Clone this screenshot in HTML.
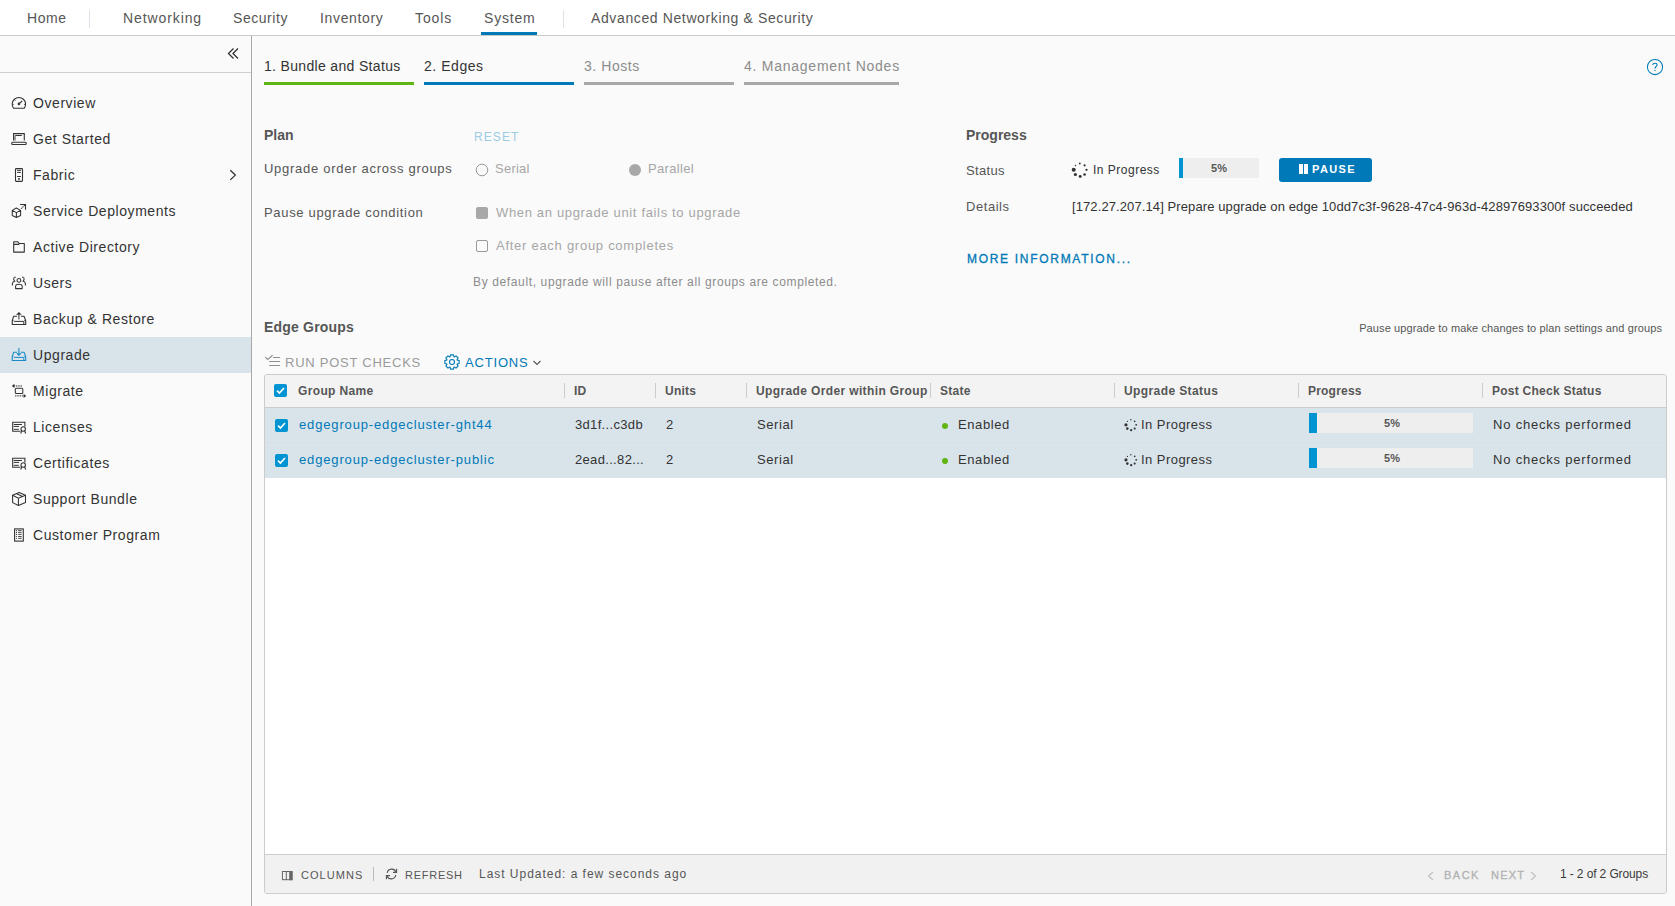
<!DOCTYPE html>
<html><head><meta charset="utf-8">
<style>
*{box-sizing:border-box;margin:0;padding:0}
html,body{width:1675px;height:906px;overflow:hidden;background:#fafafa;font-family:"Liberation Sans", sans-serif;color:#333}
.a{position:absolute;white-space:nowrap}
svg.a{overflow:visible}
</style></head><body>
<div class="a" style="left:0px;top:0px;width:1675px;height:35px;background:#fff;"></div>
<div class="a" style="left:0px;top:35px;width:1675px;height:1px;background:#c8c8c8;"></div>
<div class="a" style="left:27px;top:10px;font-size:14px;line-height:16px;color:#565656;font-weight:normal;letter-spacing:0.55px;">Home</div>
<div class="a" style="left:123px;top:10px;font-size:14px;line-height:16px;color:#565656;font-weight:normal;letter-spacing:0.9px;">Networking</div>
<div class="a" style="left:233px;top:10px;font-size:14px;line-height:16px;color:#565656;font-weight:normal;letter-spacing:0.55px;">Security</div>
<div class="a" style="left:320px;top:10px;font-size:14px;line-height:16px;color:#565656;font-weight:normal;letter-spacing:0.65px;">Inventory</div>
<div class="a" style="left:415px;top:10px;font-size:14px;line-height:16px;color:#565656;font-weight:normal;letter-spacing:0.9px;">Tools</div>
<div class="a" style="left:484px;top:10px;font-size:14px;line-height:16px;color:#565656;font-weight:normal;letter-spacing:0.8px;">System</div>
<div class="a" style="left:591px;top:10px;font-size:14px;line-height:16px;color:#565656;font-weight:normal;letter-spacing:0.62px;">Advanced Networking &amp; Security</div>
<div class="a" style="left:89px;top:10px;width:1px;height:18px;background:#dde3e8;"></div>
<div class="a" style="left:563px;top:10px;width:1px;height:18px;background:#dde3e8;"></div>
<div class="a" style="left:481px;top:32px;width:56px;height:3px;background:#0079b8;"></div>
<div class="a" style="left:0px;top:36px;width:251px;height:870px;background:#fafafa;"></div>
<div class="a" style="left:251px;top:36px;width:1px;height:870px;background:#a8a8a8;"></div>
<div class="a" style="left:0px;top:72px;width:251px;height:1px;background:#cfcfcf;"></div>
<svg class="a" style="left:226px;top:47px" width="14" height="14" viewBox="0 0 14 14"><path d="M7.5 1.5 L2.5 6.5 L7.5 11.5 M12 1.5 L7 6.5 L12 11.5" fill="none" stroke="#333" stroke-width="1.3"/></svg>
<div class="a" style="left:0px;top:337px;width:251px;height:36px;background:#d9e4ea;"></div>
<div class="a" style="left:33px;top:95px;font-size:14px;line-height:16px;color:#333;font-weight:normal;letter-spacing:0.57px;">Overview</div>
<svg class="a" style="left:11px;top:96px" width="16" height="16" viewBox="0 0 16 16"><path d="M2.6 12.3 A6.7 6.7 0 1 1 13.2 12.3 Z" fill="none" stroke="#333" stroke-width="1.1" stroke-linejoin="round"/><path d="M7.9 7.9 L11.1 5" fill="none" stroke="#333" stroke-width="1.1"/><circle cx="7.9" cy="7.9" r="1.3" fill="#333"/><path d="M1.3 8.4 H2.6 M13.2 8.4 H14.5 M3.4 3.6 L4.4 4.5" fill="none" stroke="#333" stroke-width="1"/></svg>
<div class="a" style="left:33px;top:131px;font-size:14px;line-height:16px;color:#333;font-weight:normal;letter-spacing:0.57px;">Get Started</div>
<svg class="a" style="left:11px;top:132px" width="16" height="16" viewBox="0 0 16 16"><path d="M2.6 8.6 V1.6 H13.3 V8.6" fill="none" stroke="#333" stroke-width="1.1"/><path d="M4.2 3.5 H10.8" fill="none" stroke="#333" stroke-width="1"/><rect x="3.2" y="3.5" width="1.6" height="5" fill="#888"/><rect x="0.7" y="10.3" width="14.6" height="2.2" rx="1" fill="none" stroke="#333" stroke-width="1.1"/></svg>
<div class="a" style="left:33px;top:167px;font-size:14px;line-height:16px;color:#333;font-weight:normal;letter-spacing:0.57px;">Fabric</div>
<svg class="a" style="left:11px;top:168px" width="16" height="16" viewBox="0 0 16 16"><rect x="4.5" y="0.6" width="7" height="12.8" rx="0.8" fill="none" stroke="#333" stroke-width="1.1"/><path d="M6.1 2.4 H9.9 M6.1 4.4 H9.9 M6.1 8.5 H9.9" fill="none" stroke="#333" stroke-width="1"/><rect x="7.2" y="10.1" width="1.7" height="1.7" fill="#333"/></svg>
<div class="a" style="left:33px;top:203px;font-size:14px;line-height:16px;color:#333;font-weight:normal;letter-spacing:0.57px;">Service Deployments</div>
<svg class="a" style="left:11px;top:204px" width="16" height="16" viewBox="0 0 16 16"><path d="M5.3 4 L9.6 6.4 V11.5 L5.4 13.5 L1.25 11.5 V6.4 Z M1.25 6.4 L5.4 8.6 L9.6 6.4 M5.4 8.6 V13.5" fill="none" stroke="#333" stroke-width="1.05" stroke-linejoin="round"/><path d="M10.1 4.7 L14.5 0.5" fill="none" stroke="#333" stroke-width="1.1" stroke-dasharray="1.3 0.7"/><path d="M9.1 0.5 H14.5 V5.7" fill="none" stroke="#333" stroke-width="1.1"/></svg>
<div class="a" style="left:33px;top:239px;font-size:14px;line-height:16px;color:#333;font-weight:normal;letter-spacing:0.57px;">Active Directory</div>
<svg class="a" style="left:11px;top:240px" width="16" height="16" viewBox="0 0 16 16"><path d="M2.7 12.1 V1.7 H6.6 L8.2 3.5 H13.3 V12.1 Z M2.7 4.4 H7.6 L8.4 3.6" fill="none" stroke="#333" stroke-width="1.1" stroke-linejoin="round"/></svg>
<div class="a" style="left:33px;top:275px;font-size:14px;line-height:16px;color:#333;font-weight:normal;letter-spacing:0.57px;">Users</div>
<svg class="a" style="left:11px;top:276px" width="16" height="16" viewBox="0 0 16 16"><circle cx="7.9" cy="4.4" r="1.9" fill="none" stroke="#333" stroke-width="1.05"/><path d="M4.6 12.6 V10 Q5 8.2 7.9 8.2 Q10.8 8.2 11.2 10 V12.6 Z" fill="none" stroke="#333" stroke-width="1.05" stroke-linejoin="round"/><path d="M3.2 1.3 H4.8 M2.9 1.6 Q2.3 3.8 3.6 5.2 Q2 5.6 1.4 7.3 V9.6" fill="none" stroke="#333" stroke-width="1.05"/><path d="M11 1.3 H12.6 M12.9 1.6 Q13.5 3.8 12.2 5.2 Q13.8 5.6 14.4 7.3 V9.6" fill="none" stroke="#333" stroke-width="1.05"/></svg>
<div class="a" style="left:33px;top:311px;font-size:14px;line-height:16px;color:#333;font-weight:normal;letter-spacing:0.57px;">Backup &amp; Restore</div>
<svg class="a" style="left:11px;top:312px" width="16" height="16" viewBox="0 0 16 16"><path d="M6 4.3 H2.6 L1.25 8.6 V12.5 H14.7 V8.6 L13 4.3 H9.9" fill="none" stroke="#333" stroke-width="1.1" stroke-linejoin="round"/><path d="M1.25 8.6 H2.5 M13.3 8.6 H14.7 M3.1 9.4 H12.8 V12.4" fill="none" stroke="#333" stroke-width="1.0"/><path d="M7.9 0.1 L5.1 2.7 H10.7 Z" fill="#333"/><path d="M7.9 2.5 V7.4" fill="none" stroke="#333" stroke-width="1.0"/></svg>
<div class="a" style="left:33px;top:347px;font-size:14px;line-height:16px;color:#333;font-weight:normal;letter-spacing:0.57px;">Upgrade</div>
<svg class="a" style="left:11px;top:348px" width="16" height="16" viewBox="0 0 16 16"><path d="M6 4.3 H2.6 L1.25 8.6 V12.5 H14.7 V8.6 L13 4.3 H9.9" fill="none" stroke="#1a8ac6" stroke-width="1.1" stroke-linejoin="round"/><path d="M1.25 8.6 H2.5 M13.3 8.6 H14.7 M3.1 9.4 H12.8 V12.4" fill="none" stroke="#1a8ac6" stroke-width="1.0"/><path d="M7.9 8 L5.1 5.3 H10.7 Z" fill="#1a8ac6"/><path d="M7.9 0 V5.5" fill="none" stroke="#1a8ac6" stroke-width="1.1"/></svg>
<div class="a" style="left:33px;top:383px;font-size:14px;line-height:16px;color:#333;font-weight:normal;letter-spacing:0.57px;">Migrate</div>
<svg class="a" style="left:11px;top:384px" width="16" height="16" viewBox="0 0 16 16"><rect x="4.3" y="4.3" width="7.5" height="5.2" rx="1" fill="none" stroke="#333" stroke-width="1.05"/><path d="M2.6 1.95 H11.8" fill="none" stroke="#333" stroke-width="1.0" stroke-dasharray="1.5 0.8"/><path d="M3.4 -0.2 L0.8 1.95 L3.4 4.1 Z" fill="#333"/><path d="M4 11.9 H13.2" fill="none" stroke="#333" stroke-width="1.0" stroke-dasharray="1.5 0.8"/><path d="M12.6 9.75 L15.2 11.9 L12.6 14.05 Z" fill="#333"/></svg>
<div class="a" style="left:33px;top:419px;font-size:14px;line-height:16px;color:#333;font-weight:normal;letter-spacing:0.57px;">Licenses</div>
<svg class="a" style="left:11px;top:420px" width="16" height="16" viewBox="0 0 16 16"><path d="M13.9 6.4 V2.3 H1.7 V11.3 H9.4" fill="none" stroke="#333" stroke-width="1.1"/><path d="M3.2 4.5 H10.6 M3.2 6.4 H7.7 M3.2 9.35 H7.4" fill="none" stroke="#333" stroke-width="1.0" stroke-linecap="round"/><circle cx="12.2" cy="8.9" r="2.25" fill="none" stroke="#333" stroke-width="1.05"/><path d="M10.8 10.7 L9.7 13.5 M13.6 10.7 L14.7 13.5" fill="none" stroke="#333" stroke-width="1.1"/></svg>
<div class="a" style="left:33px;top:455px;font-size:14px;line-height:16px;color:#333;font-weight:normal;letter-spacing:0.57px;">Certificates</div>
<svg class="a" style="left:11px;top:456px" width="16" height="16" viewBox="0 0 16 16"><path d="M13.9 6.4 V2.3 H1.7 V11.3 H9.4" fill="none" stroke="#333" stroke-width="1.1"/><path d="M3.2 4.5 H10.6 M3.2 6.4 H7.7 M3.2 9.35 H7.4" fill="none" stroke="#333" stroke-width="1.0" stroke-linecap="round"/><circle cx="12.2" cy="8.9" r="2.25" fill="none" stroke="#333" stroke-width="1.05"/><path d="M10.8 10.7 L9.7 13.5 M13.6 10.7 L14.7 13.5" fill="none" stroke="#333" stroke-width="1.1"/></svg>
<div class="a" style="left:33px;top:491px;font-size:14px;line-height:16px;color:#333;font-weight:normal;letter-spacing:0.57px;">Support Bundle</div>
<svg class="a" style="left:11px;top:492px" width="16" height="16" viewBox="0 0 16 16"><path d="M8.2 0.5 L14.5 3.3 V10.6 L7.4 13.5 L1.6 10.6 V3.3 Z" fill="none" stroke="#333" stroke-width="1.05" stroke-linejoin="round"/><path d="M1.6 3.3 L7.4 6.2 L14.5 3.3 M7.4 6.2 V13.5 M5.3 1.6 L11.5 4.4" fill="none" stroke="#333" stroke-width="1.05"/></svg>
<div class="a" style="left:33px;top:527px;font-size:14px;line-height:16px;color:#333;font-weight:normal;letter-spacing:0.57px;">Customer Program</div>
<svg class="a" style="left:11px;top:528px" width="16" height="16" viewBox="0 0 16 16"><rect x="3.6" y="0.9" width="8.7" height="12.2" fill="none" stroke="#333" stroke-width="1.1"/><path d="M7.2 2.6 H10.6 M7.2 4.4 H10.6 M7.2 6.4 H10.6 M7.2 8.5 H10.6 M7.2 10.3 H10.6" fill="none" stroke="#333" stroke-width="0.9"/><path d="M5.5 2.6 V2.61 M5.5 4.4 V4.41 M5.5 6.4 V6.41 M5.5 8.5 V8.51 M5.5 10.3 V10.31" stroke="#333" stroke-width="1.1" stroke-linecap="round"/></svg>
<svg class="a" style="left:226px;top:169px" width="12" height="14" viewBox="0 0 12 14"><path d="M4.3 1.3 L9.3 6.1 L4.3 10.9" fill="none" stroke="#333" stroke-width="1.3"/></svg>
<div class="a" style="left:264px;top:58px;font-size:14px;line-height:16px;color:#333;font-weight:normal;letter-spacing:0.33px;">1. Bundle and Status</div>
<div class="a" style="left:264px;top:82px;width:150px;height:3px;background:#60b515;"></div>
<div class="a" style="left:424px;top:58px;font-size:14px;line-height:16px;color:#333;font-weight:normal;letter-spacing:0.55px;">2. Edges</div>
<div class="a" style="left:424px;top:82px;width:150px;height:3px;background:#0079b8;"></div>
<div class="a" style="left:584px;top:58px;font-size:14px;line-height:16px;color:#8c8c8c;font-weight:normal;letter-spacing:0.55px;">3. Hosts</div>
<div class="a" style="left:584px;top:82px;width:150px;height:3px;background:#a8a8a8;"></div>
<div class="a" style="left:744px;top:58px;font-size:14px;line-height:16px;color:#8c8c8c;font-weight:normal;letter-spacing:0.75px;">4. Management Nodes</div>
<div class="a" style="left:744px;top:82px;width:155px;height:3px;background:#a8a8a8;"></div>
<svg class="a" style="left:1646px;top:58px" width="18" height="18" viewBox="0 0 18 18"><circle cx="9" cy="9" r="7.6" fill="none" stroke="#0079b8" stroke-width="1.05"/><path d="M6.7 7.1 Q6.9 5.2 9 5.2 Q11.1 5.2 11.1 7 Q11.1 8.2 9.7 9 Q9 9.5 8.9 10.6" fill="none" stroke="#0079b8" stroke-width="1.05"/><rect x="8.4" y="12" width="1.2" height="1" fill="#0079b8"/></svg>
<div class="a" style="left:264px;top:127px;font-size:14px;line-height:16px;color:#565656;font-weight:bold;letter-spacing:0px;">Plan</div>
<div class="a" style="left:474px;top:130px;font-size:12px;line-height:14px;color:#9ccbe3;font-weight:normal;letter-spacing:1.1px;">RESET</div>
<div class="a" style="left:264px;top:161px;font-size:13px;line-height:15px;color:#565656;font-weight:normal;letter-spacing:0.72px;">Upgrade order across groups</div>
<svg class="a" style="left:475px;top:163px" width="14" height="14" viewBox="0 0 14 14"><circle cx="7" cy="7" r="5.8" fill="none" stroke="#9a9a9a" stroke-width="1"/></svg>
<div class="a" style="left:495px;top:161px;font-size:13px;line-height:15px;color:#a6a6a6;font-weight:normal;letter-spacing:0.25px;">Serial</div>
<svg class="a" style="left:628px;top:163px" width="14" height="14" viewBox="0 0 14 14"><circle cx="7" cy="7" r="6" fill="#a8a8a8"/></svg>
<div class="a" style="left:648px;top:161px;font-size:13px;line-height:15px;color:#a6a6a6;font-weight:normal;letter-spacing:0.33px;">Parallel</div>
<div class="a" style="left:264px;top:205px;font-size:13px;line-height:15px;color:#565656;font-weight:normal;letter-spacing:0.68px;">Pause upgrade condition</div>
<div class="a" style="left:476px;top:207px;width:12px;height:12px;background:#a8a8a8;border-radius:2px"></div>
<div class="a" style="left:496px;top:205px;font-size:13px;line-height:15px;color:#a6a6a6;font-weight:normal;letter-spacing:0.66px;">When an upgrade unit fails to upgrade</div>
<div class="a" style="left:476px;top:240px;width:12px;height:12px;background:transparent;border:1px solid #9a9a9a;border-radius:2px"></div>
<div class="a" style="left:496px;top:238px;font-size:13px;line-height:15px;color:#a6a6a6;font-weight:normal;letter-spacing:0.73px;">After each group completes</div>
<div class="a" style="left:473px;top:275px;font-size:12px;line-height:14px;color:#8c8c8c;font-weight:normal;letter-spacing:0.63px;">By default, upgrade will pause after all groups are completed.</div>
<div class="a" style="left:966px;top:127px;font-size:14px;line-height:16px;color:#565656;font-weight:bold;letter-spacing:0px;">Progress</div>
<div class="a" style="left:966px;top:163px;font-size:13px;line-height:15px;color:#565656;font-weight:normal;letter-spacing:0.35px;">Status</div>
<svg class="a" style="left:1070px;top:160px" width="20" height="20" viewBox="0 0 20 20"><circle cx="3.70" cy="9.80" r="2.00" fill="#333"/><circle cx="5.40" cy="14.50" r="1.60" fill="#333"/><circle cx="10.20" cy="16.50" r="1.45" fill="#333"/><circle cx="14.60" cy="14.50" r="1.30" fill="#333"/><circle cx="16.50" cy="9.80" r="1.15" fill="#333"/><circle cx="14.60" cy="5.40" r="1.05" fill="#333"/><circle cx="9.80" cy="3.50" r="0.90" fill="#333"/><circle cx="5.50" cy="5.50" r="0.75" fill="#333"/></svg>
<div class="a" style="left:1093px;top:163px;font-size:12px;line-height:14px;color:#333;font-weight:normal;letter-spacing:0.5px;">In Progress</div>
<div class="a" style="left:1179px;top:158px;width:80px;height:20px;background:#eeeeee;"></div>
<div class="a" style="left:1179px;top:158px;width:4px;height:20px;background:#0094d3;"></div>
<div class="a" style="left:1119px;width:200px;top:162px;font-size:11px;line-height:12px;color:#565656;font-weight:bold;letter-spacing:0px;text-align:center;">5%</div>
<div class="a" style="left:1279px;top:158px;width:93px;height:24px;background:#0079b8;border-radius:3px"></div>
<div class="a" style="left:1299px;top:164px;width:4px;height:10px;background:#fff;"></div>
<div class="a" style="left:1304px;top:164px;width:4px;height:10px;background:#fff;"></div>
<div class="a" style="left:1312px;top:163px;font-size:11px;line-height:12px;color:#fff;font-weight:bold;letter-spacing:1.4px;">PAUSE</div>
<div class="a" style="left:966px;top:199px;font-size:13px;line-height:15px;color:#565656;font-weight:normal;letter-spacing:0.55px;">Details</div>
<div class="a" style="left:1072px;top:199px;font-size:13px;line-height:15px;color:#333;font-weight:normal;letter-spacing:0.1px;">[172.27.207.14] Prepare upgrade on edge 10dd7c3f-9628-47c4-963d-42897693300f succeeded</div>
<div class="a" style="left:967px;top:252px;font-size:12px;line-height:14px;color:#0079b8;font-weight:normal;letter-spacing:1.7px;-webkit-text-stroke:0.3px #0079b8">MORE INFORMATION...</div>
<div class="a" style="left:264px;top:319px;font-size:14px;line-height:16px;color:#565656;font-weight:bold;letter-spacing:0.2px;">Edge Groups</div>
<div class="a" style="right:13px;top:322px;font-size:11px;line-height:12px;color:#565656;font-weight:normal;letter-spacing:0.11px;text-align:right;">Pause upgrade to make changes to plan settings and groups</div>
<svg class="a" style="left:265px;top:354px" width="17" height="14" viewBox="0 0 17 14"><path d="M0.2 3.15 L2.7 5.4 L7.6 1.2" fill="none" stroke="#8f8f8f" stroke-width="1.15"/><path d="M8.1 3.5 H15.1 M4.15 7.5 H15.1 M4.15 11.5 H15.1" stroke="#8f8f8f" stroke-width="1"/></svg>
<div class="a" style="left:285px;top:355px;font-size:13px;line-height:15px;color:#9a9a9a;font-weight:normal;letter-spacing:0.75px;">RUN POST CHECKS</div>
<svg class="a" style="left:443px;top:353px" width="18" height="18" viewBox="0 0 18 18"><path d="M14.27 7.10 L16.14 7.50 L16.14 10.50 L14.27 10.90 L14.07 11.38 L15.11 12.99 L12.99 15.11 L11.38 14.07 L10.90 14.27 L10.50 16.14 L7.50 16.14 L7.10 14.27 L6.62 14.07 L5.01 15.11 L2.89 12.99 L3.93 11.38 L3.73 10.90 L1.86 10.50 L1.86 7.50 L3.73 7.10 L3.93 6.62 L2.89 5.01 L5.01 2.89 L6.62 3.93 L7.10 3.73 L7.50 1.86 L10.50 1.86 L10.90 3.73 L11.38 3.93 L12.99 2.89 L15.11 5.01 L14.07 6.62 Z" fill="none" stroke="#0079b8" stroke-width="1.1" stroke-linejoin="round"/><circle cx="9" cy="9" r="2.5" fill="none" stroke="#0079b8" stroke-width="1.1"/></svg>
<div class="a" style="left:465px;top:355px;font-size:13px;line-height:15px;color:#0079b8;font-weight:normal;letter-spacing:0.83px;">ACTIONS</div>
<svg class="a" style="left:532px;top:359px" width="10" height="8" viewBox="0 0 10 8"><path d="M1.5 2 L5 5.5 L8.5 2" fill="none" stroke="#565656" stroke-width="1.1"/></svg>
<div class="a" style="left:264px;top:374px;width:1403px;height:520px;background:#fff;border:1px solid #ccc;border-radius:3px"></div>
<div class="a" style="left:265px;top:375px;width:1401px;height:32px;background:#f3f3f3;border-radius:2px 2px 0 0"></div>
<div class="a" style="left:265px;top:407px;width:1401px;height:1px;background:#ccc;"></div>
<div class="a" style="left:265px;top:408px;width:1401px;height:70px;background:#d9e4ea;"></div>
<div class="a" style="left:265px;top:442px;width:1401px;height:1px;background:#dcdfe1;"></div>
<div class="a" style="left:564px;top:383px;width:1px;height:15px;background:#ccc;"></div>
<div class="a" style="left:655px;top:383px;width:1px;height:15px;background:#ccc;"></div>
<div class="a" style="left:746px;top:383px;width:1px;height:15px;background:#ccc;"></div>
<div class="a" style="left:930px;top:383px;width:1px;height:15px;background:#ccc;"></div>
<div class="a" style="left:1114px;top:383px;width:1px;height:15px;background:#ccc;"></div>
<div class="a" style="left:1298px;top:383px;width:1px;height:15px;background:#ccc;"></div>
<div class="a" style="left:1482px;top:383px;width:1px;height:15px;background:#ccc;"></div>
<svg class="a" style="left:274px;top:384px" width="13" height="13" viewBox="0 0 13 13"><rect x="0" y="0" width="13" height="13" rx="2" fill="#0094d3"/><path d="M3 6.6 L5.4 9 L10 4" fill="none" stroke="#fff" stroke-width="1.6"/></svg>
<div class="a" style="left:298px;top:384px;font-size:12px;line-height:14px;color:#565656;font-weight:bold;letter-spacing:0.35px;">Group Name</div>
<div class="a" style="left:574px;top:384px;font-size:12px;line-height:14px;color:#565656;font-weight:bold;letter-spacing:0.25px;">ID</div>
<div class="a" style="left:665px;top:384px;font-size:12px;line-height:14px;color:#565656;font-weight:bold;letter-spacing:0.25px;">Units</div>
<div class="a" style="left:756px;top:384px;font-size:12px;line-height:14px;color:#565656;font-weight:bold;letter-spacing:0.37px;">Upgrade Order within Group</div>
<div class="a" style="left:940px;top:384px;font-size:12px;line-height:14px;color:#565656;font-weight:bold;letter-spacing:0.25px;">State</div>
<div class="a" style="left:1124px;top:384px;font-size:12px;line-height:14px;color:#565656;font-weight:bold;letter-spacing:0.4px;">Upgrade Status</div>
<div class="a" style="left:1308px;top:384px;font-size:12px;line-height:14px;color:#565656;font-weight:bold;letter-spacing:0.2px;">Progress</div>
<div class="a" style="left:1492px;top:384px;font-size:12px;line-height:14px;color:#565656;font-weight:bold;letter-spacing:0.25px;">Post Check Status</div>
<svg class="a" style="left:275px;top:419px" width="13" height="13" viewBox="0 0 13 13"><rect x="0" y="0" width="13" height="13" rx="2" fill="#0094d3"/><path d="M3 6.6 L5.4 9 L10 4" fill="none" stroke="#fff" stroke-width="1.6"/></svg>
<div class="a" style="left:299px;top:417px;font-size:13px;line-height:15px;color:#0079b8;font-weight:normal;letter-spacing:0.85px;">edgegroup-edgecluster-ght44</div>
<div class="a" style="left:575px;top:417px;font-size:13px;line-height:15px;color:#333;font-weight:normal;letter-spacing:0.33px;">3d1f...c3db</div>
<div class="a" style="left:666px;top:417px;font-size:13px;line-height:15px;color:#333;font-weight:normal;letter-spacing:0px;">2</div>
<div class="a" style="left:757px;top:417px;font-size:13px;line-height:15px;color:#333;font-weight:normal;letter-spacing:0.6px;">Serial</div>
<div class="a" style="left:942px;top:423px;width:6px;height:6px;background:#60b515;border-radius:50%"></div>
<div class="a" style="left:958px;top:417px;font-size:13px;line-height:15px;color:#333;font-weight:normal;letter-spacing:0.6px;">Enabled</div>
<svg class="a" style="left:1121px;top:415px" width="20" height="20" viewBox="0 0 20 20"><circle cx="4.96" cy="9.84" r="1.60" fill="#333"/><circle cx="6.32" cy="13.60" r="1.28" fill="#333"/><circle cx="10.16" cy="15.20" r="1.16" fill="#333"/><circle cx="13.68" cy="13.60" r="1.04" fill="#333"/><circle cx="15.20" cy="9.84" r="0.92" fill="#333"/><circle cx="13.68" cy="6.32" r="0.84" fill="#333"/><circle cx="9.84" cy="4.80" r="0.72" fill="#333"/><circle cx="6.40" cy="6.40" r="0.60" fill="#333"/></svg>
<div class="a" style="left:1141px;top:417px;font-size:13px;line-height:15px;color:#333;font-weight:normal;letter-spacing:0.45px;">In Progress</div>
<div class="a" style="left:1309px;top:413px;width:164px;height:20px;background:#eeeeee;"></div>
<div class="a" style="left:1309px;top:413px;width:8px;height:20px;background:#0094d3;"></div>
<div class="a" style="left:1292px;width:200px;top:417px;font-size:11px;line-height:12px;color:#565656;font-weight:bold;letter-spacing:0px;text-align:center;">5%</div>
<div class="a" style="left:1493px;top:417px;font-size:13px;line-height:15px;color:#333;font-weight:normal;letter-spacing:0.8px;">No checks performed</div>
<svg class="a" style="left:275px;top:454px" width="13" height="13" viewBox="0 0 13 13"><rect x="0" y="0" width="13" height="13" rx="2" fill="#0094d3"/><path d="M3 6.6 L5.4 9 L10 4" fill="none" stroke="#fff" stroke-width="1.6"/></svg>
<div class="a" style="left:299px;top:452px;font-size:13px;line-height:15px;color:#0079b8;font-weight:normal;letter-spacing:0.85px;">edgegroup-edgecluster-public</div>
<div class="a" style="left:575px;top:452px;font-size:13px;line-height:15px;color:#333;font-weight:normal;letter-spacing:0.33px;">2ead...82...</div>
<div class="a" style="left:666px;top:452px;font-size:13px;line-height:15px;color:#333;font-weight:normal;letter-spacing:0px;">2</div>
<div class="a" style="left:757px;top:452px;font-size:13px;line-height:15px;color:#333;font-weight:normal;letter-spacing:0.6px;">Serial</div>
<div class="a" style="left:942px;top:458px;width:6px;height:6px;background:#60b515;border-radius:50%"></div>
<div class="a" style="left:958px;top:452px;font-size:13px;line-height:15px;color:#333;font-weight:normal;letter-spacing:0.6px;">Enabled</div>
<svg class="a" style="left:1121px;top:450px" width="20" height="20" viewBox="0 0 20 20"><circle cx="4.96" cy="9.84" r="1.60" fill="#333"/><circle cx="6.32" cy="13.60" r="1.28" fill="#333"/><circle cx="10.16" cy="15.20" r="1.16" fill="#333"/><circle cx="13.68" cy="13.60" r="1.04" fill="#333"/><circle cx="15.20" cy="9.84" r="0.92" fill="#333"/><circle cx="13.68" cy="6.32" r="0.84" fill="#333"/><circle cx="9.84" cy="4.80" r="0.72" fill="#333"/><circle cx="6.40" cy="6.40" r="0.60" fill="#333"/></svg>
<div class="a" style="left:1141px;top:452px;font-size:13px;line-height:15px;color:#333;font-weight:normal;letter-spacing:0.45px;">In Progress</div>
<div class="a" style="left:1309px;top:448px;width:164px;height:20px;background:#eeeeee;"></div>
<div class="a" style="left:1309px;top:448px;width:8px;height:20px;background:#0094d3;"></div>
<div class="a" style="left:1292px;width:200px;top:452px;font-size:11px;line-height:12px;color:#565656;font-weight:bold;letter-spacing:0px;text-align:center;">5%</div>
<div class="a" style="left:1493px;top:452px;font-size:13px;line-height:15px;color:#333;font-weight:normal;letter-spacing:0.8px;">No checks performed</div>
<div class="a" style="left:265px;top:854px;width:1401px;height:1px;background:#ccc;"></div>
<div class="a" style="left:265px;top:855px;width:1401px;height:38px;background:#f1f1f1;border-radius:0 0 2px 2px"></div>
<svg class="a" style="left:281px;top:870px" width="12" height="11" viewBox="0 0 12 11"><rect x="1.4" y="1.5" width="9.6" height="8.2" fill="none" stroke="#666" stroke-width="1"/><rect x="8.2" y="1" width="3.3" height="9.2" fill="#666"/><path d="M5.3 1 V10" stroke="#666" stroke-width="1"/></svg>
<div class="a" style="left:301px;top:869px;font-size:11px;line-height:12px;color:#565656;font-weight:normal;letter-spacing:1.05px;">COLUMNS</div>
<div class="a" style="left:373px;top:867px;width:1px;height:14px;background:#bbb;"></div>
<svg class="a" style="left:385px;top:867px" width="13" height="14" viewBox="0 0 13 14"><path d="M11 5 A4.6 4.6 0 0 0 2.2 6 M2 9 A4.6 4.6 0 0 0 10.8 8" fill="none" stroke="#565656" stroke-width="1.1"/><path d="M11.6 1.8 V5.4 H8" fill="none" stroke="#565656" stroke-width="1.1"/><path d="M1.4 12.2 V8.6 H5" fill="none" stroke="#565656" stroke-width="1.1"/></svg>
<div class="a" style="left:405px;top:869px;font-size:11px;line-height:12px;color:#565656;font-weight:normal;letter-spacing:0.75px;">REFRESH</div>
<div class="a" style="left:479px;top:867px;font-size:12px;line-height:14px;color:#565656;font-weight:normal;letter-spacing:0.97px;">Last Updated: a few seconds ago</div>
<svg class="a" style="left:1426px;top:871px" width="9" height="10" viewBox="0 0 9 10"><path d="M7 1 L2.5 5 L7 9" fill="none" stroke="#c0c0c0" stroke-width="1.2"/></svg>
<div class="a" style="left:1444px;top:869px;font-size:11px;line-height:12px;color:#b3b3b3;font-weight:normal;letter-spacing:1.5px;-webkit-text-stroke:0.35px #b3b3b3">BACK</div>
<div class="a" style="left:1491px;top:869px;font-size:11px;line-height:12px;color:#b3b3b3;font-weight:normal;letter-spacing:1.2px;-webkit-text-stroke:0.35px #b3b3b3">NEXT</div>
<svg class="a" style="left:1529px;top:871px" width="9" height="10" viewBox="0 0 9 10"><path d="M2 1 L6.5 5 L2 9" fill="none" stroke="#c0c0c0" stroke-width="1.2"/></svg>
<div class="a" style="left:1560px;top:867px;font-size:12px;line-height:14px;color:#3a3a3a;font-weight:normal;letter-spacing:-0.12px;">1 - 2 of 2 Groups</div>
</body></html>
